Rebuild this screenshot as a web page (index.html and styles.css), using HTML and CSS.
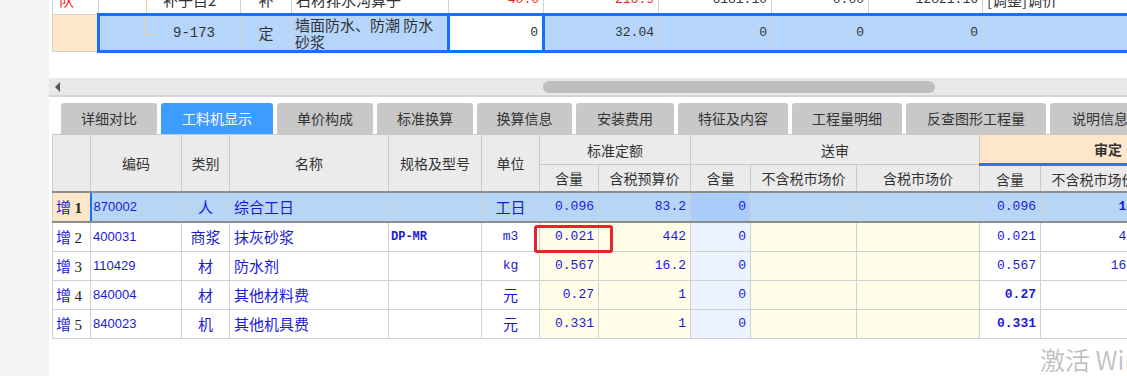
FILE: index.html
```html
<!DOCTYPE html>
<html lang="zh-CN">
<head>
    <meta charset="UTF-8">
    <meta name="viewport" content="width=device-width, initial-scale=1.0">
    <title>工料机显示</title>
    <link rel="stylesheet" href="styles.css">
</head>
<body>

<div class="panel">
    <div class="topGrid">
        <table class="qdTable">
            <colgroup>
                <col style="width:46px"><col style="width:142px"><col style="width:51px"><col style="width:157px">
                <col style="width:95px"><col style="width:115px"><col style="width:113px"><col style="width:97px">
                <col style="width:114px"><col style="width:200px">
            </colgroup>
            <tr class="cutRow">
                <td class="rowHead red">队</td>
                <td class="tree">补子目2</td>
                <td class="center">补</td>
                <td>石材排水沟算子</td>
                <td class="num red">40.0</td>
                <td class="num red">216.9</td>
                <td class="num">6181.10</td>
                <td class="num">0.00</td>
                <td class="num">12821.16</td>
                <td>[调整]调价</td>
            </tr>
            <tr class="curRow">
                <td class="rowHead"></td>
                <td class="tree branch first">9-173</td>
                <td class="center">定</td>
                <td class="wrap">墙面防水、防潮 防水砂浆</td>
                <td class="num editing">0</td>
                <td class="num">32.04</td>
                <td class="num">0</td>
                <td class="num">0</td>
                <td class="num">0</td>
                <td></td>
            </tr>
        </table>
    </div>

    <div class="hscroll">
        <span class="arrow"></span>
        <span class="thumb"></span>
    </div>

    <div class="tabs">
        <div class="tab" style="width:96px">详细对比</div>
        <div class="tab active" style="width:112px">工料机显示</div>
        <div class="tab" style="width:96px">单价构成</div>
        <div class="tab" style="width:96px">标准换算</div>
        <div class="tab" style="width:95px">换算信息</div>
        <div class="tab" style="width:98px">安装费用</div>
        <div class="tab" style="width:110px">特征及内容</div>
        <div class="tab" style="width:110px">工程量明细</div>
        <div class="tab" style="width:140px">反查图形工程量</div>
        <div class="tab" style="width:100px">说明信息</div>
    </div>

    <table class="gljTable">
        <colgroup>
            <col style="width:38px"><col style="width:91px"><col style="width:48px"><col style="width:159px">
            <col style="width:93px"><col style="width:58px"><col style="width:59px"><col style="width:92px">
            <col style="width:60px"><col style="width:106px"><col style="width:123px"><col style="width:61px">
            <col style="width:106px"><col style="width:100px">
        </colgroup>
        <tr class="headTop">
            <th rowspan="2"></th>
            <th rowspan="2">编码</th>
            <th rowspan="2">类别</th>
            <th rowspan="2">名称</th>
            <th rowspan="2">规格及型号</th>
            <th rowspan="2">单位</th>
            <th colspan="2">标准定额</th>
            <th colspan="3">送审</th>
            <th colspan="3" class="audit">审定</th>
        </tr>
        <tr class="headSub">
            <th>含量</th>
            <th>含税预算价</th>
            <th>含量</th>
            <th>不含税市场价</th>
            <th>含税市场价</th>
            <th class="auditSub">含量</th>
            <th class="auditSub">不含税市场价</th>
            <th class="auditSub">含税市场价</th>
        </tr>
        <tr class="selRow">
            <td class="rowNo sel">增 <b>1</b></td>
            <td class="code first">870002</td>
            <td class="center">人</td>
            <td>综合工日</td>
            <td></td>
            <td class="center">工日</td>
            <td class="num">0.096</td>
            <td class="num">83.2</td>
            <td class="num sendQty">0</td>
            <td></td>
            <td></td>
            <td class="num">0.096</td>
            <td class="num bold">100</td>
            <td></td>
        </tr>
        <tr>
            <td class="rowNo">增 <span>2</span></td>
            <td class="code">400031</td>
            <td class="center">商浆</td>
            <td>抹灰砂浆</td>
            <td class="spec">DP-MR</td>
            <td class="center mono">m3</td>
            <td class="num std">0.021</td>
            <td class="num std">442</td>
            <td class="num sendQty">0</td>
            <td class="std"></td>
            <td class="std"></td>
            <td class="num">0.021</td>
            <td class="num">442</td>
            <td></td>
        </tr>
        <tr>
            <td class="rowNo">增 <span>3</span></td>
            <td class="code">110429</td>
            <td class="center">材</td>
            <td>防水剂</td>
            <td></td>
            <td class="center mono">kg</td>
            <td class="num std">0.567</td>
            <td class="num std">16.2</td>
            <td class="num sendQty">0</td>
            <td class="std"></td>
            <td class="std"></td>
            <td class="num">0.567</td>
            <td class="num">16.2</td>
            <td></td>
        </tr>
        <tr>
            <td class="rowNo">增 <span>4</span></td>
            <td class="code">840004</td>
            <td class="center">材</td>
            <td>其他材料费</td>
            <td></td>
            <td class="center">元</td>
            <td class="num std">0.27</td>
            <td class="num std">1</td>
            <td class="num sendQty">0</td>
            <td class="std"></td>
            <td class="std"></td>
            <td class="num bold">0.27</td>
            <td></td>
            <td></td>
        </tr>
        <tr>
            <td class="rowNo">增 <span>5</span></td>
            <td class="code">840023</td>
            <td class="center">机</td>
            <td>其他机具费</td>
            <td></td>
            <td class="center">元</td>
            <td class="num std">0.331</td>
            <td class="num std">1</td>
            <td class="num sendQty">0</td>
            <td class="std"></td>
            <td class="std"></td>
            <td class="num bold">0.331</td>
            <td></td>
            <td></td>
        </tr>
    </table>
</div>

<div class="markBox"></div>
<div class="watermark">激活 Windows</div>

</body>
</html>
```

FILE: styles.css
```css
body {
    font-family: 'Noto Sans CJK SC', sans-serif;
    margin: 0;
    padding: 0;
    width: 1127px;
    height: 376px;
    overflow: hidden;
    background-color: #f3f3f3;
    color: #333;
}

.panel {
    margin-left: 49px;
    height: 376px;
    background-color: #fff;
    overflow: hidden;
}

table {
    border-collapse: collapse;
    table-layout: fixed;
}

td, th {
    padding: 0 4px;
    white-space: nowrap;
    overflow: hidden;
}

.center {
    text-align: center;
}

.num {
    text-align: right;
    font-family: 'Liberation Mono', monospace;
    font-size: 13px;
}

.red {
    color: #f01e1e;
}

/* upper grid (清单/定额) */
.topGrid {
    height: 56px;
    overflow: hidden;
}

.qdTable {
    width: 1130px;
    margin-left: 3px;
    margin-top: -15px;
    font-size: 15px;
    line-height: 18px;
}

.qdTable td {
    border: 1px solid #d2d2d2;
}

.cutRow td {
    height: 27px;
}

.curRow td {
    height: 34px;
    background-color: #b5d5fb;
    border-top: 3px solid #1572f4;
    border-bottom: 3px solid #1572f4;
}

.curRow td.rowHead {
    background-color: #fde6c9;
    border: 1px solid #d2d2d2;
}

.curRow td.first {
    border-left: 3px solid #1572f4;
}

.curRow td.editing {
    background-color: #fff;
    border: 3px solid #1572f4;
}

.qdTable .rowHead {
    padding-left: 6px;
}

.tree {
    padding-left: 64px;
    font-family: 'Liberation Mono', monospace;
    font-size: 14px;
    background: linear-gradient(#f5ca93, #f5ca93) no-repeat 47px 0 / 1px 100%;
}

.cutRow .tree {
    font-family: 'Noto Sans CJK SC', sans-serif;
    font-size: 15px;
    padding-left: 64px;
}

.curRow .branch {
    padding-left: 73px;
    background:
        linear-gradient(#f5ca93, #f5ca93) no-repeat 44px 0 / 1px 19px,
        linear-gradient(#f5ca93, #f5ca93) no-repeat 44px 18px / 11px 1px,
        #b5d5fb;
}

.wrap {
    white-space: normal;
    padding-left: 3px;
    line-height: 17px;
}

/* horizontal scrollbar */
.hscroll {
    margin-top: 22px;
    height: 17px;
    background-color: #e8e8e8;
    border-bottom: 2px solid #d4d4d4;
    display: flex;
    align-items: center;
}

.arrow {
    margin-left: 6px;
    width: 0;
    height: 0;
    border-top: 5px solid transparent;
    border-bottom: 5px solid transparent;
    border-right: 5px solid #555;
}

.thumb {
    margin-left: 483px;
    width: 392px;
    height: 12px;
    border-radius: 6px;
    background-color: #bebebe;
}

/* tabs */
.tabs {
    display: flex;
    gap: 4px;
    padding: 6px 0 0 12px;
}

.tab {
    flex: none;
    height: 31px;
    line-height: 30px;
    text-align: center;
    font-size: 14px;
    background-color: #c8c8c8;
    border-radius: 3px 3px 0 0;
    color: #333;
}

.tab.active {
    background-color: #3e9cff;
    color: #fff;
}

/* 工料机 grid */
.gljTable {
    width: 1194px;
    margin-left: 3px;
    font-size: 15px;
}

.gljTable th {
    font-weight: normal;
    font-size: 14px;
    background-color: #ebebeb;
    border: 1px solid #c9c9c9;
    color: #333;
}

.headTop th {
    height: 28px;
}

.headSub th {
    height: 25px;
}

.gljTable th.audit {
    background-color: #fde6c9;
    font-weight: bold;
    text-align: left;
    padding-left: 114px;
    border-bottom: 3px solid #1e7af2;
}

.gljTable td {
    height: 28px;
    border: 1px solid #d0d0d0;
    color: #1a1ad6;
    line-height: 18px;
}

.gljTable .rowNo {
    padding: 0 0 0 3px;
    color: #1a1ad6;
    background-color: #fff;
}

.rowNo b, .rowNo span {
    font-family: 'Liberation Serif', serif;
    font-size: 15px;
    color: #222;
}

.gljTable .rowNo.sel {
    background-color: #fde6c9;
}

.code {
    font-family: 'Liberation Sans', sans-serif;
    font-size: 13px;
    padding-left: 2px;
}

.mono {
    font-family: 'Liberation Mono', monospace;
    font-size: 13px;
}

.spec {
    font-family: 'Liberation Mono', monospace;
    font-size: 12px;
    font-weight: bold;
    padding-left: 2px;
}

.bold {
    font-weight: bold;
}

.gljTable td.std {
    background-color: #fffde8;
}

.gljTable td.sendQty {
    background-color: #ebf3fe;
}

.selRow td {
    background-color: #b7d6f6;
    border-top: 2px solid #8c8c8c;
    border-bottom: 2px solid #8c8c8c;
}

.gljTable .selRow td.sendQty {
    background-color: #a9cdf8;
}

.selRow td.first {
    border-left: 2px solid #1572f4;
}

/* overlays */
.markBox {
    position: absolute;
    left: 534px;
    top: 225px;
    width: 73px;
    height: 22px;
    border: 3px solid #ea2328;
    border-radius: 3px;
}

.watermark {
    position: absolute;
    left: 1040px;
    top: 341px;
    font-size: 25px;
    color: rgba(0, 0, 0, 0.25);
    white-space: nowrap;
}
```
